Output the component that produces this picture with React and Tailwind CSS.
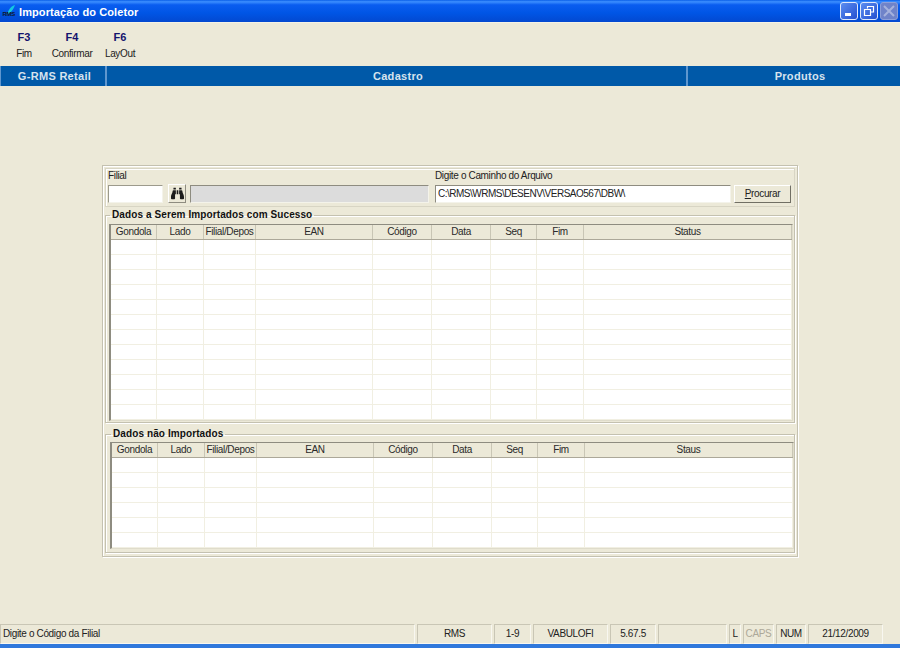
import React from "react";
import { FaBinoculars } from "react-icons/fa";

const columns = ["Gondola", "Lado", "Filial/Depos", "EAN", "Código", "Data", "Seq", "Fim"];

const DataTable = ({ last, rows }) => (
  <div className="border-l-2 border-t border-r border-b border-[#8e8c80] border-r-[#dfdccb] border-b-[#dfdccb] bg-white">
    <div className="grid grid-cols-[46px_47px_52px_117px_59px_59px_46px_47px_1fr] h-[15px] bg-[#ece9d8] border-b border-[#aca899]">
      {[...columns, last].map((col) => (
        <div key={col} className="border-r border-[#c9c6b5] text-center leading-[14px] text-[#2a2a2a] whitespace-nowrap overflow-hidden">
          {col}
        </div>
      ))}
    </div>
    {Array.from({ length: rows }).map((_, i) => (
      <div key={i} className="grid grid-cols-[46px_47px_52px_117px_59px_59px_46px_47px_1fr] h-[15px] border-b border-[#f1efe2]">
        {[...columns, last].map((col) => (
          <div key={col} className="border-r border-[#f1efe2]" />
        ))}
      </div>
    ))}
  </div>
);

const GroupBox = ({ title, className, children }) => (
  <fieldset className={`border border-[#c4c1b0] shadow-[inset_1px_1px_0_#fff,1px_1px_0_#fff] ${className}`}>
    <legend className="ml-[1px] px-[2px] h-[12px] leading-[12px] text-[10px] tracking-[0.1px] font-bold text-[#111]">{title}</legend>
    {children}
  </fieldset>
);

const StatusCell = ({ className, children }) => (
  <div className={`h-[20px] border border-[#c9c6b5] border-r-[#f8f7f0] border-b-[#f8f7f0] text-center leading-[17px] text-[#222] ${className}`}>
    {children}
  </div>
);

const App = () => {
  return (
    <div className="w-[900px] h-[648px] flex flex-col bg-[#ece9d8] overflow-hidden text-[10px] tracking-[-0.35px] font-['Liberation_Sans',Arial,sans-serif]">
      {/* Title bar */}
      <div className="h-[23px] shrink-0 flex items-center pl-[2px] pr-[2px] border-b border-[#f4f2e6] bg-[linear-gradient(180deg,#0a5fe8_0%,#3d8fff_8%,#0a5df0_22%,#0055e5_60%,#0348d0_100%)]">
        <svg width="16" height="16" viewBox="0 0 16 16" className="shrink-0">
          <path d="M13 2 C9 3 6 7 5 12 L8 10 C10 8 12 5 13 2 Z" fill="#14c8e0" />
          <text x="0.5" y="13" fontSize="6" fontWeight="700" fill="#101828" fontFamily="Liberation Sans">RMS</text>
        </svg>
        <span className="ml-[1px] pt-[2px] text-[11px] font-bold text-white tracking-[0.1px]">Importação do Coletor</span>
        <div className="ml-auto flex gap-[2px]">
          <div className="w-[18px] h-[18px] rounded-[3px] border border-[#dfe8fb] bg-[linear-gradient(135deg,#5b8df0,#2450d0)] flex items-end pl-[4px] pb-[3px]">
            <div className="w-[6px] h-[3px] bg-white" />
          </div>
          <div className="w-[18px] h-[18px] rounded-[3px] border border-[#dfe8fb] bg-[linear-gradient(135deg,#5b8df0,#2450d0)] flex items-center justify-center">
            <svg width="12" height="12" viewBox="0 0 12 12" fill="none" stroke="#fff">
              <path d="M4.5 3.5 V1.5 H10.5 V7 H8" strokeWidth="1.2" />
              <path d="M1.5 4.5 H7.5 V10.5 H1.5 Z" strokeWidth="1.2" />
            </svg>
          </div>
          <div className="w-[18px] h-[18px] rounded-[3px] border border-[#8d9fd8] bg-[#6f83c9] flex items-center justify-center">
            <svg width="12" height="12" viewBox="0 0 12 12" stroke="#a5b2dd" strokeWidth="2">
              <path d="M1 1 L11 11 M11 1 L1 11" />
            </svg>
          </div>
        </div>
      </div>

      {/* Toolbar */}
      <div className="h-[43px] shrink-0 flex pt-[8px]">
        {[["F3", "Fim"], ["F4", "Confirmar"], ["F6", "LayOut"]].map(([key, label]) => (
          <div key={key} className="w-[48px] flex flex-col items-center">
            <span className="h-[13px] leading-[13px] text-[11px] tracking-normal font-bold text-[#14146e]">{key}</span>
            <span className="mt-[4px] h-[12px] leading-[12px] text-[#222] whitespace-nowrap">{label}</span>
          </div>
        ))}
      </div>

      {/* Module bar */}
      <div className="h-[20px] shrink-0 flex bg-[#0059a8] border-l border-[#5f97cf] text-[11px] font-bold text-[#d7e3ee] leading-[20px] tracking-[0.3px] text-center">
        <div className="w-[106px] pl-[3px] border-r-2 border-[#5f97cf]">G-RMS Retail</div>
        <div className="w-[581px] pl-[3px] border-r-2 border-[#5f97cf]">Cadastro</div>
        <div className="flex-1 pl-[12px]">Produtos</div>
      </div>

      {/* Form panel */}
      <div className="flex-1 min-h-0 pt-[79px] pl-[102px]">
        <div className="w-[696px] h-[392px] border border-[#c4c1b0] shadow-[inset_1px_1px_0_#fff,1px_1px_0_#fff] p-[2px]">
          <div className="h-[39px] border border-[#d8d5c4] shadow-[inset_1px_1px_0_#fff] flex pl-[2px] pt-[1px]">
            <div className="w-[327px] shrink-0">
              <div className="h-[12px] leading-[12px] text-[#222]">Filial</div>
              <div className="flex mt-[3px] items-start">
                <div className="w-[55px] h-[18px] bg-white border border-[#9c9a8c] border-r-[#f4f3ea] border-b-[#f4f3ea]" />
                <div className="ml-[5px] w-[18px] h-[19px] -mt-[1px] bg-[#ece9d8] border border-white border-r-[#8e8c80] border-b-[#8e8c80] flex items-center justify-center">
                  <FaBinoculars size={13} color="#1c1c1c" />
                </div>
                <div className="ml-[4px] w-[239px] h-[18px] bg-[#dcdcdc] border border-[#8e8c80] border-r-[#f4f3ea] border-b-[#f4f3ea]" />
              </div>
            </div>
            <div className="flex-1">
              <div className="h-[12px] leading-[12px] text-[#222]">Digite o Caminho do Arquivo</div>
              <div className="flex mt-[3px]">
                <div className="w-[296px] h-[18px] bg-white border border-[#8e8c80] border-r-[#f4f3ea] border-b-[#f4f3ea] pl-[2px] leading-[16px] tracking-[-0.5px] text-[#222] whitespace-nowrap overflow-hidden">
                  C:\RMS\WRMS\DESENV\VERSAO567\DBW\
                </div>
                <div className="ml-[3px] w-[57px] h-[18px] bg-[#ece9d8] border border-white border-r-[#716f64] border-b-[#716f64] text-center leading-[16px] text-[#222]">
                  <span className="underline">P</span>rocurar
                </div>
              </div>
            </div>
          </div>

          <GroupBox title="Dados a Serem Importados com Sucesso" className="mt-[2px] h-[214px] pl-[3px] pr-[1px]">
            <div className="mt-[3px]">
              <DataTable last="Status" rows={12} />
            </div>
          </GroupBox>

          <GroupBox title="Dados não Importados" className="mt-[5px] h-[125px] pl-[4px]">
            <div className="mt-[2px]">
              <DataTable last="Staus" rows={6} />
            </div>
          </GroupBox>
        </div>
      </div>

      {/* Status bar */}
      <div className="h-[20px] shrink-0 flex">
        <StatusCell className="w-[415px] !text-left pl-[2px]">Digite o Código da Filial</StatusCell>
        <StatusCell className="ml-[2px] w-[75px]">RMS</StatusCell>
        <StatusCell className="ml-[2px] w-[37px]">1-9</StatusCell>
        <StatusCell className="ml-[2px] w-[75px]">VABULOFI</StatusCell>
        <StatusCell className="ml-[2px] w-[46px]">5.67.5</StatusCell>
        <StatusCell className="ml-[2px] w-[69px]" />
        <StatusCell className="ml-[2px] w-[12px]">L</StatusCell>
        <StatusCell className="ml-[2px] w-[31px] !text-[#aca899]">CAPS</StatusCell>
        <StatusCell className="ml-[2px] w-[30px]">NUM</StatusCell>
        <StatusCell className="ml-[2px] w-[75px]">21/12/2009</StatusCell>
      </div>
      <div className="h-[4px] shrink-0 bg-[#2f78dc]" />
    </div>
  );
};

export default App;
